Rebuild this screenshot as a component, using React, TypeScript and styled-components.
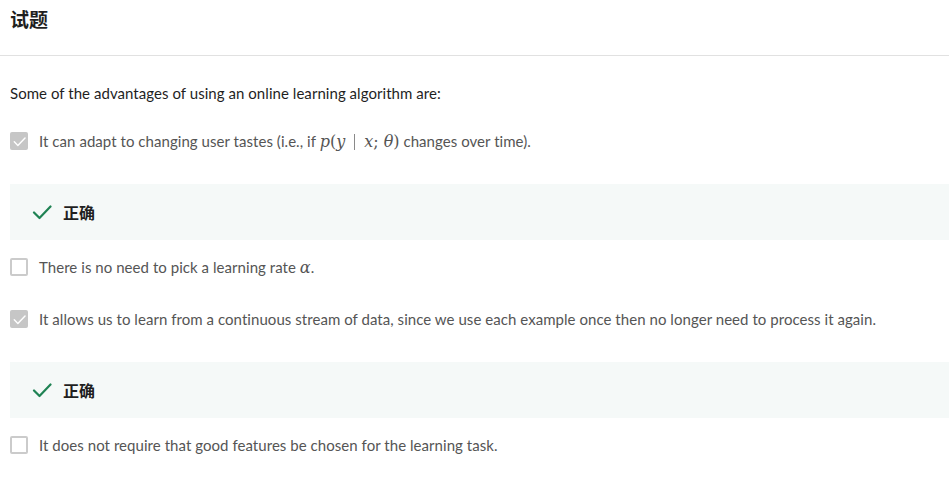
import React from "react";
import styled, { createGlobalStyle } from "styled-components";

const Global = createGlobalStyle`
  html, body { margin: 0; padding: 0; background: #fff; }
  body { font-family: "Lato", "Noto Sans CJK SC", sans-serif; }
`;

const Page = styled.div`
  width: 949px;
  overflow: hidden;
`;

const Header = styled.div`
  border-bottom: 1px solid #e1e1e1;
  padding: 6px 10px 0;
  box-sizing: border-box;
  height: 56px;
`;

const Title = styled.h2`
  margin: 0;
  font-family: "Noto Sans CJK SC", sans-serif;
  font-size: 19px;
  line-height: 26px;
  font-weight: 700;
  color: #1f1f1f;
`;

const Body = styled.div`
  padding: 25px 0 0 10px;
`;

const Question = styled.div`
  font-size: 15px;
  letter-spacing: 0.05px;
  line-height: 24px;
  color: #1f1f1f;
  margin-bottom: 10px;
`;

const OptionRow = styled.div`
  display: flex;
  align-items: center;
  padding: 14px 0;
  height: 24px;
`;

const Box = styled.span<{ $checked: boolean }>`
  width: 18px;
  height: 18px;
  box-sizing: border-box;
  border-radius: 2px;
  flex: none;
  margin-right: 11px;
  display: flex;
  align-items: center;
  justify-content: center;
  border: ${(p) => (p.$checked ? "none" : "2px solid #cbcbcb")};
  background: ${(p) => (p.$checked ? "#c6c6c6" : "#fff")};
`;

const OptionText = styled.span`
  font-size: 15px;
  letter-spacing: 0.05px;
  line-height: 24px;
  color: #555;
`;

const Math = styled.span`
  font-family: "DejaVu Serif", "Liberation Serif", serif;
  font-style: italic;
  font-size: 16px;
  line-height: 1;
  letter-spacing: 0;
  color: #555;
`;

const MathUp = styled.span`
  font-family: "DejaVu Serif", "Liberation Serif", serif;
  font-style: normal;
  font-size: 16px;
  line-height: 1;
  letter-spacing: 0;
`;

const Bar = styled.span`
  display: inline-block;
  width: 1px;
  height: 16px;
  background: #8a8a8a;
  margin: 0 9px;
  vertical-align: -3px;
`;

const Feedback = styled.div`
  margin: 17px 0 1px;
  height: 56px;
  background: #f5f9f8;
  display: flex;
  align-items: center;
  padding-left: 22px;
`;

const FeedbackLabel = styled.span`
  font-family: "Noto Sans CJK SC", sans-serif;
  font-weight: 700;
  font-size: 16px;
  color: #1f1f1f;
  margin-left: 11px;
`;

const Check = ({ color, size }: { color: string; size: number }) => (
  <svg width={size} height={size} viewBox="0 0 20 20" fill="none">
    <path d="M2 10.5 L7.5 16 L18.5 4.5" stroke={color} strokeWidth={2.2} strokeLinecap="round" strokeLinejoin="round" />
  </svg>
);

const Option = ({ checked, children }: { checked: boolean; children: React.ReactNode }) => (
  <OptionRow>
    <Box $checked={checked}>{checked && <Check color="#fff" size={13} />}</Box>
    <OptionText>{children}</OptionText>
  </OptionRow>
);

const Correct = () => (
  <Feedback>
    <Check color="#1f8354" size={20} />
    <FeedbackLabel>正确</FeedbackLabel>
  </Feedback>
);

export default function App() {
  return (
    <Page>
      <Global />
      <Header>
        <Title>试题</Title>
      </Header>
      <Body>
        <Question>Some of the advantages of using an online learning algorithm are:</Question>
        <Option checked>
          It can adapt to changing user tastes (i.e., if <Math>p</Math>
          <MathUp>(</MathUp>
          <Math>y</Math>
          <Bar />
          <Math>x</Math>
          <MathUp>; </MathUp>
          <Math>θ</Math>
          <MathUp>)</MathUp> changes over time).
        </Option>
        <Correct />
        <Option checked={false}>
          There is no need to pick a learning rate <Math>α</Math>.
        </Option>
        <Option checked>
          It allows us to learn from a continuous stream of data, since we use each example once then no longer need to
          process it again.
        </Option>
        <Correct />
        <Option checked={false}>It does not require that good features be chosen for the learning task.</Option>
      </Body>
    </Page>
  );
}
